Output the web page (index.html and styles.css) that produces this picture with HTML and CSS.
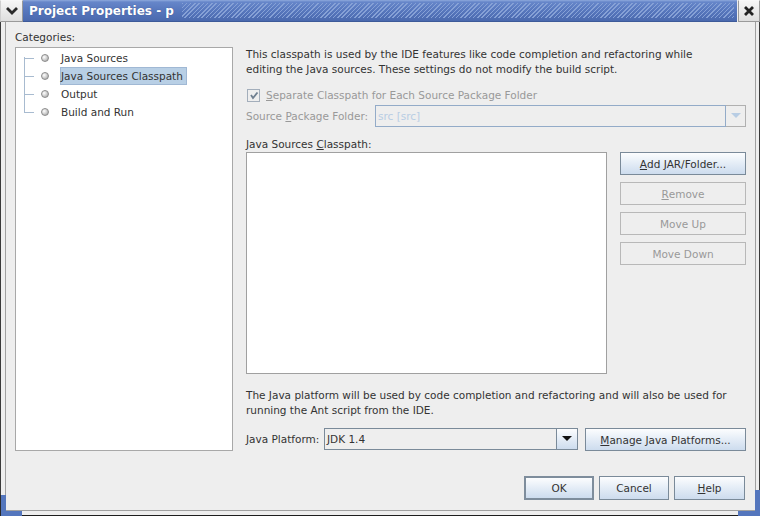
FILE: index.html
```html
<!DOCTYPE html>
<html>
<head>
<meta charset="utf-8">
<link rel="stylesheet" href="styles.css">
</head>
<body>
<div class="window">
  <div class="titlebar">
    <div class="tb-menu">
      <svg width="14" height="10" viewBox="0 0 14 10"><polyline points="2,2 7,7 12,2" fill="none" stroke="#2a2a2a" stroke-width="2.8"/></svg>
    </div>
    <div class="tb-title">
      <span class="tb-text">Project Properties - p</span>
      <span class="tb-stripes"></span>
    </div>
    <div class="tb-close">
      <svg width="12" height="12" viewBox="0 0 12 12"><path d="M2 2 L10 10 M10 2 L2 10" stroke="#222" stroke-width="2.8"/></svg>
    </div>
  </div>
  <div class="frame">
    <div class="content">
      <div class="main">
        <div class="left">
          <div class="label">Categories:</div>
          <div class="tree">
            <div class="row first"><span class="conn"></span><span class="bullet"></span><span class="item">Java Sources</span></div>
            <div class="row"><span class="conn"></span><span class="bullet"></span><span class="item selected">Java Sources Classpath</span></div>
            <div class="row"><span class="conn"></span><span class="bullet"></span><span class="item">Output</span></div>
            <div class="row last"><span class="conn"></span><span class="bullet"></span><span class="item">Build and Run</span></div>
          </div>
        </div>
        <div class="right">
          <div class="desc">This classpath is used by the IDE features like code completion and refactoring while<br>editing the Java sources. These settings do not modify the build script.</div>
          <div class="check-row disabled">
            <span class="checkbox"><svg width="10" height="10" viewBox="0 0 10 10"><path d="M2 5 L4 8 L8.5 2.5" fill="none" stroke="#6f7f90" stroke-width="1.8"/></svg></span>
            <span><u>S</u>eparate Classpath for Each Source Package Folder</span>
          </div>
          <div class="combo-row">
            <span class="src-label disabled">Source <u>P</u>ackage Folder:</span>
            <div class="combo disabled-combo">
              <span class="combo-field">src [src]</span>
              <span class="combo-arrow"><svg width="10" height="6" viewBox="0 0 10 6"><path d="M0 0 H10 L5 5 Z" fill="#b8cde4"/></svg></span>
            </div>
          </div>
          <div class="label cp-label">Java Sources <u>C</u>lasspath:</div>
          <div class="list-row">
            <div class="list"></div>
            <div class="btn-col">
              <div class="btn"><u>A</u>dd JAR/Folder...</div>
              <div class="btn off"><u>R</u>emove</div>
              <div class="btn off">Move Up</div>
              <div class="btn off">Move Down</div>
            </div>
          </div>
          <div class="desc desc2">The Java platform will be used by code completion and refactoring and will also be used for<br>running the Ant script from the IDE.</div>
          <div class="platform-row">
            <span class="plat-label"><u>J</u>ava Platform:</span>
            <div class="combo plat-combo">
              <span class="combo-field">JDK 1.4</span>
              <span class="combo-arrow"><svg width="10" height="6" viewBox="0 0 10 6"><path d="M0 0 H10 L5 5 Z" fill="#111"/></svg></span>
            </div>
            <div class="btn manage"><u>M</u>anage Java Platforms...</div>
          </div>
        </div>
      </div>
      <div class="footer">
        <div class="btn fbtn default">OK</div>
        <div class="btn fbtn">Cancel</div>
        <div class="btn fbtn help"><u>H</u>elp</div>
      </div>
    </div>
  </div>
  <span class="corner corner-left"></span>
  <span class="corner corner-right"></span>
</div>
</body>
</html>
```
FILE: styles.css
```css
html, body {
  margin: 0;
  padding: 0;
  background: #eeeeee;
}
u {
  text-decoration: underline;
  text-underline-offset: 1px;
}
.window {
  width: 760px;
  height: 516px;
  position: relative;
  background: #eeeeee;
  display: flex;
  flex-direction: column;
  font-family: "DejaVu Sans", sans-serif;
  font-size: 10.5px;
  color: #333333;
  overflow: hidden;
}
.titlebar {
  height: 22px;
  display: flex;
  flex: none;
}
.tb-menu {
  width: 23px;
  box-sizing: border-box;
  border: 1px solid #9a9a9a;
  border-left-color: #cfcfcf;
  border-top-color: #f8f8f8;
  background: linear-gradient(#f6f6f6, #dedede);
  display: flex;
  align-items: center;
  justify-content: center;
}
.tb-title {
  flex: 1;
  display: flex;
  align-items: center;
  background: linear-gradient(#8ea9dc 0, #6686c9 2px, #5777bd 50%, #4a69ae 100%);
  border-bottom: 1px solid #3d5a99;
  box-sizing: border-box;
}
.tb-text {
  padding-left: 6px;
  color: #ffffff;
  font-weight: bold;
  font-size: 12px;
  text-shadow: 0 0 1px rgba(30, 50, 100, 0.6);
  white-space: nowrap;
}
.tb-stripes {
  flex: 1;
  align-self: stretch;
  margin: 3px 3px 3px 8px;
  background: repeating-linear-gradient(135deg, #86a1d6 0 1px, rgba(0,0,0,0) 1px 3px);
}
.tb-close {
  width: 22px;
  margin-left: 1px;
  box-sizing: border-box;
  border: 1px solid #9a9a9a;
  border-top-color: #f8f8f8;
  background: linear-gradient(#f6f6f6, #dedede);
  display: flex;
  align-items: center;
  justify-content: center;
}
.frame {
  flex: 1;
  display: flex;
  border-left: 1px solid #3a3a3a;
  border-right: 1px solid #3a3a3a;
  border-bottom: 1px solid #1e1e1e;
  padding: 0 3px 4px 4px;
  background: #eeeeee;
}
.content {
  flex: 1;
  display: flex;
  flex-direction: column;
  border: 1px solid #a0a0a0;
  border-top: none;
  padding: 8px 9px 0 9px;
}
.main {
  display: flex;
  gap: 13px;
}
.left {
  width: 218px;
  display: flex;
  flex-direction: column;
}
.label {
  height: 15px;
  line-height: 15px;
  white-space: nowrap;
}
.left .label {
  margin-bottom: 2px;
}
.tree {
  height: 404px;
  box-sizing: border-box;
  border: 1px solid #a8a8a8;
  background: #ffffff;
  padding: 1px 0 0 8px;
}
.row {
  height: 18px;
  display: flex;
  align-items: center;
}
.conn {
  width: 10px;
  height: 18px;
  flex: none;
  background:
    linear-gradient(#a8bbd0, #a8bbd0) left top / 1px 100% no-repeat,
    linear-gradient(#a8bbd0, #a8bbd0) left 9px / 10px 1px no-repeat;
}
.row.first .conn {
  background:
    linear-gradient(#a8bbd0, #a8bbd0) left 8px / 1px 10px no-repeat,
    linear-gradient(#a8bbd0, #a8bbd0) left 9px / 10px 1px no-repeat;
}
.row.last .conn {
  background:
    linear-gradient(#a8bbd0, #a8bbd0) left top / 1px 10px no-repeat,
    linear-gradient(#a8bbd0, #a8bbd0) left 9px / 10px 1px no-repeat;
}
.bullet {
  width: 8px;
  height: 8px;
  flex: none;
  margin-left: 7px;
  border-radius: 50%;
  box-sizing: border-box;
  border: 1px solid #8c8c8c;
  background: radial-gradient(circle at 35% 35%, #ffffff 0, #d4d4d4 45%, #9c9c9c 100%);
}
.item {
  margin-left: 11px;
  height: 18px;
  box-sizing: border-box;
  line-height: 16px;
  border: 1px solid transparent;
  padding-right: 3px;
  white-space: nowrap;
}
.item.selected {
  background: #b8cfe5;
  border-color: #a0b8d4;
}
.right {
  width: 500px;
  display: flex;
  flex-direction: column;
}
.desc {
  margin-top: 17px;
  line-height: 15px;
  white-space: nowrap;
}
.desc2 {
  margin-top: 14px;
}
.disabled {
  color: #999999;
}
.check-row {
  margin-top: 10px;
  height: 16px;
  display: flex;
  align-items: center;
  white-space: nowrap;
}
.checkbox {
  width: 13px;
  height: 13px;
  box-sizing: border-box;
  border: 1px solid #a3aebb;
  background: #eeeeee;
  margin-left: 1px;
  margin-right: 6px;
  display: flex;
  align-items: center;
  justify-content: center;
}
.combo-row {
  margin-top: 2px;
  height: 22px;
  display: flex;
  align-items: stretch;
}
.src-label {
  width: 129px;
  flex: none;
  line-height: 22px;
  white-space: nowrap;
}
.combo {
  flex: 1;
  display: flex;
}
.combo-field {
  flex: 1;
  box-sizing: border-box;
  padding-left: 2px;
  white-space: nowrap;
  background: #eeeeee;
}
.combo-arrow {
  width: 20px;
  box-sizing: border-box;
  display: flex;
  align-items: center;
  justify-content: center;
}
.disabled-combo .combo-field {
  border: 1px solid #93abc8;
  line-height: 20px;
  color: #b8cde4;
}
.disabled-combo .combo-arrow {
  border: 1px solid #b0b0b0;
  border-left: none;
}
.cp-label {
  margin-top: 10px;
}
.list-row {
  height: 222px;
  display: flex;
  gap: 13px;
}
.list {
  width: 361px;
  box-sizing: border-box;
  border: 1px solid #a0a0a0;
  background: #ffffff;
}
.btn-col {
  flex: 1;
  display: flex;
  flex-direction: column;
  gap: 7px;
}
.btn {
  height: 23px;
  box-sizing: border-box;
  border: 1px solid #7a8a99;
  background: linear-gradient(#fcfdfe 0, #e6eef7 45%, #cddcee 100%);
  display: flex;
  align-items: center;
  justify-content: center;
  white-space: nowrap;
  color: #333333;
}
.btn.off {
  background: #eeeeee;
  border-color: #b8b8b8;
  color: #999999;
}
.platform-row {
  margin-top: 10px;
  height: 23px;
  display: flex;
}
.plat-label {
  width: 78px;
  flex: none;
  line-height: 23px;
  white-space: nowrap;
}
.plat-combo {
  flex: none;
  width: 254px;
}
.plat-combo .combo-field {
  border: 1px solid #7a8a99;
  line-height: 20px;
  height: 22px;
  color: #333333;
}
.plat-combo .combo-arrow {
  width: 21px;
  height: 22px;
  border: 1px solid #7a8a99;
  border-left: none;
  background: linear-gradient(#fcfdfe 0, #e6eef7 45%, #cddcee 100%);
}
.manage {
  margin-left: 7px;
  flex: 1;
}
.footer {
  margin-top: 25px;
  display: flex;
  justify-content: flex-end;
  gap: 5px;
  padding-right: 1px;
}
.fbtn {
  width: 70px;
  height: 24px;
}
.fbtn.help {
  width: 71px;
}
.fbtn.default {
  border: 2px solid #7e8d9c;
}
.corner {
  position: absolute;
  background: #4f6fb3;
}
.corner-left {
  left: 0;
  bottom: 0;
  width: 22px;
  height: 21px;
  background:
    linear-gradient(#5476bd, #5476bd) left top / 5px 100% no-repeat,
    linear-gradient(#5476bd, #5476bd) left bottom / 100% 5px no-repeat;
  border-left: 1px solid #2a2a2a;
  box-sizing: border-box;
}
.corner-right {
  right: 0;
  bottom: 0;
  width: 22px;
  height: 26px;
  background:
    linear-gradient(#5476bd, #5476bd) right top / 5px 100% no-repeat,
    linear-gradient(#5476bd, #5476bd) left bottom / 100% 5px no-repeat;
  box-sizing: border-box;
}
```
